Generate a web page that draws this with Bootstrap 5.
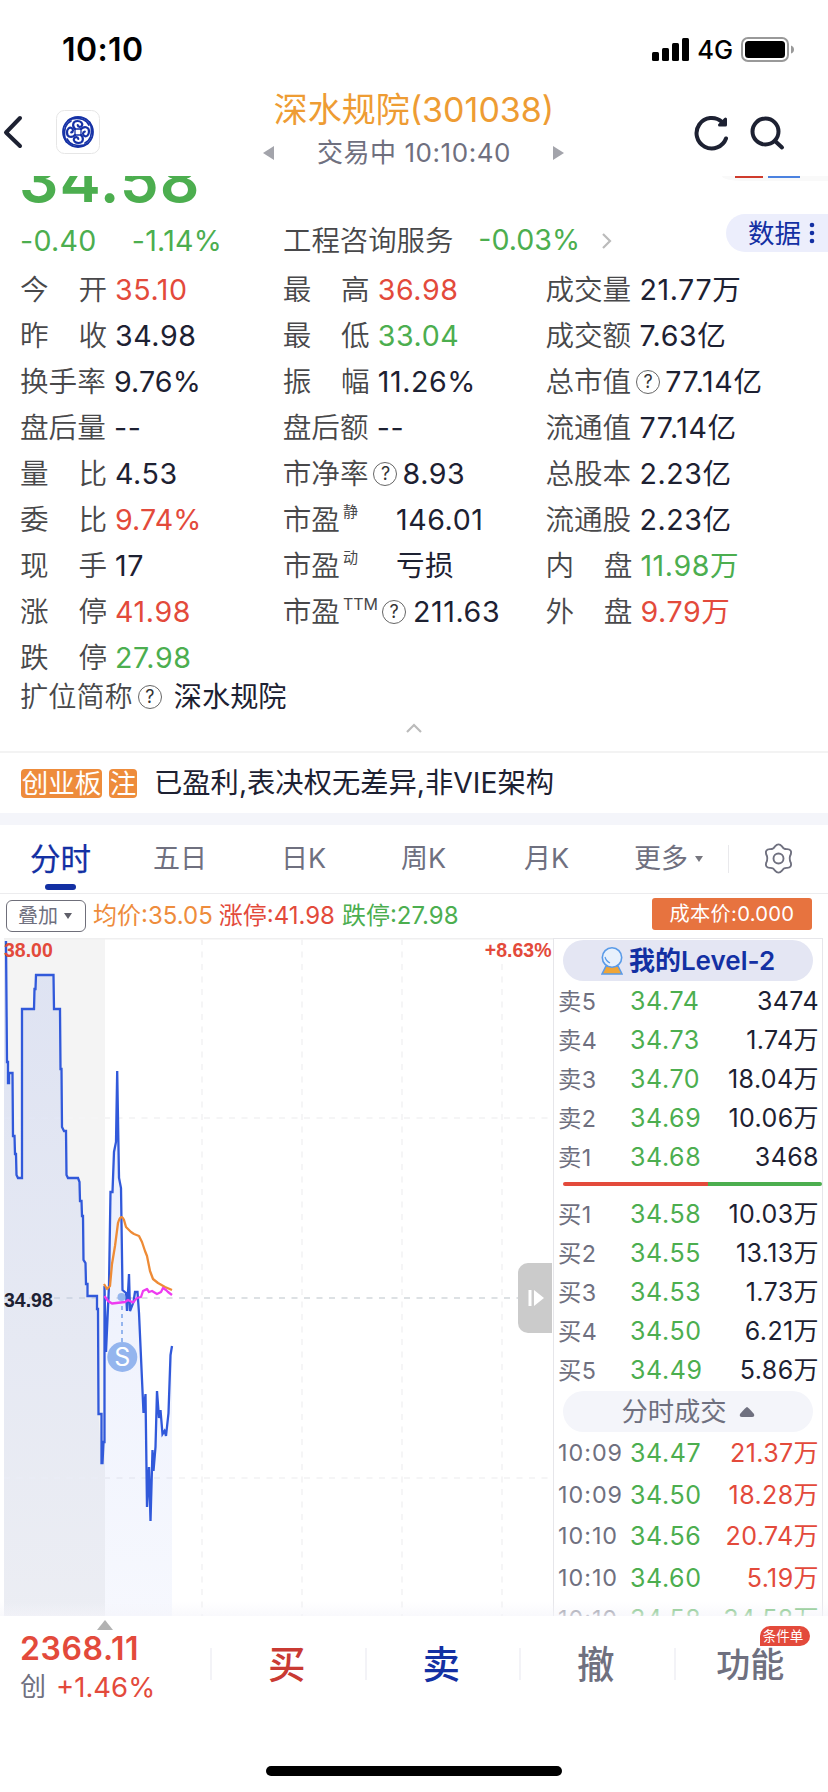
<!DOCTYPE html>
<html lang="zh-CN">
<head>
<meta charset="utf-8">
<meta name="viewport" content="width=device-width, initial-scale=1">
<title>深水规院(301038)</title>
<link href="https://cdn.jsdelivr.net/npm/bootstrap@5.3.0/dist/css/bootstrap.min.css" rel="stylesheet">
<style>
:root{--ink:#1d2132;--lbl:#48484a;--mute:#6f707f;--up:#e34a3b;--down:#4cae4f;--navy:#1330a3;--org:#ee8c3c}
html,body{height:1792px;overflow:hidden}
body{width:828px;background:#fff;color:var(--ink);font-family:Inter,"Noto Sans CJK SC",sans-serif;font-size:28.6px;line-height:46px;white-space:nowrap}
svg{display:block;flex:none}
.up{color:var(--up)}.down{color:var(--down)}.navy{color:var(--navy)}.mute{color:var(--mute)}.orange{color:var(--org)}
.status{height:99px;padding:0 34px 0 62px;color:#000}
.clock{font-size:32px;font-weight:600;letter-spacing:.4px}
.net{font-size:25.5px;font-weight:450;margin:0 8px 0 8px}
.head{height:77px;padding:0 43px 0 3px}
.title{font-size:34px;line-height:40px;color:#ee9c33}
.sub{font-size:26px;line-height:34px;color:var(--mute);letter-spacing:.55px}
.pricebox{height:39px;overflow:hidden}
.price{font-size:62px;font-weight:600;line-height:56px;margin:-24px 0 0 19px;letter-spacing:1px}
.chips{width:106px;height:5px;background:#f9f9f9;border-radius:0 0 0 20px/0 0 0 5px;padding-left:13px;gap:5px}
.chips i{height:2px}
.summary{height:52px;padding-left:20px}
.c1{width:263px;letter-spacing:.3px}
.datapill{width:102px;height:38px;border-radius:19px 0 0 19px;background:#eceefc;color:var(--navy);font-size:26.5px;line-height:38px;padding-left:22px;margin-top:-17px}
.quotes{padding-left:20px;height:413px}
.quotes>div{width:262.7px}
.q{height:46px;color:var(--ink);letter-spacing:.6px}
.k,.kf,.q sup{letter-spacing:0}
.k{width:86px;color:var(--lbl);margin-right:8px;flex:none;font-weight:350}
.k2{width:87px;display:flex;justify-content:space-between}
.kf{width:auto;color:var(--lbl);font-weight:350}
.q sup{font-size:15px;line-height:18px;top:0;align-self:flex-start;margin:6px 0 0 3px;color:var(--lbl)}
.qm{width:24px;height:24px;border:1.3px solid #666;border-radius:50%;font-size:18px;line-height:21px;text-align:center;color:#333;flex:none;letter-spacing:0}
.ext{height:40px;line-height:34px;padding:0 0 6px 20px;font-size:28.2px}
.note{height:62px;padding-left:21px;border-top:2px solid #f3f3f3}
.tag-o{background:var(--org);color:#fff;height:29px;line-height:28px;border-radius:4px;font-size:26.5px;margin-right:7px;text-align:center}
.band{height:12px;background:#f4f5fa}
.tabs{height:69px;border-bottom:1.5px solid #ececee;color:var(--mute);font-size:27px}
.tabs>div{display:flex;align-items:center;height:69px;padding-bottom:2px}
.tabs .on{position:relative;color:var(--navy);font-size:30.5px;font-weight:400;-webkit-text-stroke:.25px var(--navy)}
.on::after{content:"";position:absolute;left:45px;bottom:4px;width:31px;height:6px;border-radius:3px;background:var(--navy)}
.tri{width:0;height:0;border:4.5px solid transparent;border-bottom:0;border-top:6.5px solid #77777f}
.legendbar{height:44px;padding:0 16px 0 6px;font-size:24px}
.overlaybtn{width:80px;height:32px;border:1.6px solid #6f6f7a;border-radius:6px;font-size:20px;line-height:28px;color:var(--mute);padding-left:11px}
.cost{width:160px;height:32px;background:#e7733f;color:#fff;border-radius:3px;font-size:20.2px;line-height:32px;text-align:center;letter-spacing:.3px;margin-top:-4px}
.main{height:678px;position:relative;overflow:hidden}
.book{width:270px;height:690px;border:1.5px solid #e6e6ea;border-bottom:0;font-size:25px;letter-spacing:.4px}
.lv2,.deal{width:250px;height:41px;border-radius:21px;margin-left:9px;line-height:41px;letter-spacing:0}
.lv2{background:#e4e6f3;color:var(--navy);font-weight:600;font-size:26px;margin-top:1px;margin-bottom:1px}
.deal{background:#f4f5fa;color:var(--mute);font-size:26.3px;margin-top:1px}
.r{height:39px;line-height:39px;padding:0 3px 0 4px}
.r>:first-child{width:72px;font-size:23.3px;color:var(--mute)}
.r>:nth-child(2){letter-spacing:.6px}
.r>:last-child{margin-left:auto}
.t{height:41.5px;line-height:42px}
.t>:first-child{letter-spacing:1px}
.bidask{height:4px;margin:5px 0 9px 9px;width:259px;border-radius:2px;overflow:hidden}
.fade-b{position:absolute;left:0;right:0;bottom:0;height:14px;background:linear-gradient(rgba(244,244,250,0),rgba(244,244,250,.6))}
.foot{height:176px;padding-left:20px;position:relative}
.idx{width:190px;padding-top:14px}
.idx b{font-size:32px;font-weight:600;line-height:38px;display:block;letter-spacing:.6px}
.act{width:154.5px;height:32px;border-left:2px solid #f3f3f7;display:flex;align-items:center;justify-content:center;font-size:37.5px;font-weight:500;margin-top:32px;padding:2px 3px 0 0;position:relative}
.cond{position:absolute;left:84px;top:-22px;width:50px;height:20px;border-radius:10px 10px 10px 0;background:var(--up);color:#fff;font-size:13.5px;font-weight:400;line-height:20px;text-align:center;padding-right:3px}
.mark-up{position:absolute;left:97px;top:4px;border:8px solid transparent;border-top:0;border-bottom:10px solid #b2b2b2}
.home{position:absolute;left:266px;bottom:16px;width:296px;height:10px;border-radius:5px;background:#000}
</style>
</head>
<body>
<header class="status d-flex align-items-center">
  <span class="clock me-auto">10:10</span>
  <svg width="37" height="24" viewBox="0 0 37 24"><rect y="14" width="7" height="9" rx="1.5"/><rect x="10" y="10" width="7" height="13" rx="1.5"/><rect x="20" y="5" width="7" height="18" rx="1.5"/><rect x="30" width="7" height="23" rx="1.5"/></svg>
  <span class="net">4G</span>
  <svg width="53" height="26" viewBox="0 0 53 26"><rect x="1" y="1" width="46" height="23" rx="6" fill="#fff" stroke="#999" stroke-width="2"/><rect x="4" y="4" width="40" height="17" rx="3.5"/><path d="M50 8.500q3 1 3 4t-3 4z" fill="#999"/></svg>
</header>

<nav class="head d-flex align-items-start">
  <svg class="mt-3" width="22" height="34" viewBox="0 0 22 34" fill="none" stroke="#1d2132" stroke-width="4" stroke-linecap="round" stroke-linejoin="round"><path d="M17 3 3 17.500 17 31"/></svg>
  <svg width="44" height="44" viewBox="-22 -22 44 44" style="margin:11px 0 0 31px"><rect x="-21.500" y="-21.500" width="43" height="43" rx="8" fill="#fff" stroke="#e6e6e6"/>
    <g fill="none" stroke="#1632a6" stroke-width="2.200" stroke-linecap="round"><circle r="15" stroke-width="1.800"/>
      <g id="curl"><path d="M-3-3C-6-6-5.500-11-.5-11C3-11 5-8.500 4-6.500C3-4.500 0-4.500-.3-6.800"/><path d="M-3.500-3H3.500" stroke-width="1.300"/><path d="M-10-11.500Q-3-15 5-12.500Q9-11 11-7" stroke-width="1.700"/></g>
      <use href="#curl" transform="rotate(90)"/><use href="#curl" transform="rotate(180)"/><use href="#curl" transform="rotate(270)"/></g></svg>
  <div class="mx-auto d-flex flex-column align-items-center" style="padding-left:34px;margin-top:-9px">
    <div class="title">深水规院(301038)</div>
    <div class="d-flex align-items-center sub" style="margin-top:6px">
      <svg width="12" height="14"><path d="M11 0v14L0 7z" fill="#a3a4ab"/></svg>
      <span style="padding:0 42px 0 42px">交易中 10:10:40</span>
      <svg width="12" height="14"><path d="M0 0v14L11 7z" fill="#a3a4ab"/></svg>
    </div>
  </div>
  <svg class="mt-3" width="34" height="36" viewBox="694 114 34 36" fill="none" stroke="#1d2132" stroke-width="4" stroke-linecap="round"><path d="M726 137.500A15.200 15.200 0 1 1 722 121"/><path d="M725.500 118v6h-6z" fill="#1d2132" stroke-width="3" stroke-linejoin="round"/></svg>
  <svg class="mt-3" style="margin-left:21px" width="36" height="36" viewBox="750 114 36 36" fill="none" stroke="#1d2132" stroke-width="4" stroke-linecap="round"><circle cx="766.500" cy="130.500" r="13"/><path d="m776 140 7 6.500"/></svg>
</nav>

<section class="pricebox d-flex justify-content-between">
  <div class="price down">34.58</div>
  <div class="chips d-flex"><i style="width:28px;background:#cf3b2c"></i><i style="width:32px;background:#4b82e0"></i></div>
</section>
<section class="summary d-flex align-items-center">
  <div class="c1 down"><span>-0.40</span><span style="margin-left:35px">-1.14%</span></div>
  <span style="color:var(--lbl);font-size:28.400px;font-weight:350">工程咨询服务</span>
  <span class="down" style="margin:-3px 21px 0 25px">-0.03%</span>
  <svg width="12" height="18" fill="none" stroke="#bbb" stroke-width="2.200"><path d="m2 2 7 7-7 7"/></svg>
  <div class="datapill d-flex align-items-center ms-auto">数据<svg class="ms-2" width="6" height="22" fill="#1330a3"><circle cx="3" cy="3" r="2.300"/><circle cx="3" cy="11" r="2.300"/><circle cx="3" cy="19" r="2.300"/></svg></div>
</section>

<section class="quotes d-flex">
  <div>
    <div class="q d-flex"><span class="k k2"><i class="fst-normal">今</i><i class="fst-normal">开</i></span><span class="up">35.10</span></div>
    <div class="q d-flex"><span class="k k2"><i class="fst-normal">昨</i><i class="fst-normal">收</i></span><span>34.98</span></div>
    <div class="q d-flex"><span class="k">换手率</span><span style="letter-spacing:.1px">9.76%</span></div>
    <div class="q d-flex"><span class="k">盘后量</span><span>--</span></div>
    <div class="q d-flex"><span class="k k2"><i class="fst-normal">量</i><i class="fst-normal">比</i></span><span>4.53</span></div>
    <div class="q d-flex"><span class="k k2"><i class="fst-normal">委</i><i class="fst-normal">比</i></span><span class="up" style="letter-spacing:.1px">9.74%</span></div>
    <div class="q d-flex"><span class="k k2"><i class="fst-normal">现</i><i class="fst-normal">手</i></span><span>17</span></div>
    <div class="q d-flex"><span class="k k2"><i class="fst-normal">涨</i><i class="fst-normal">停</i></span><span class="up">41.98</span></div>
    <div class="q d-flex"><span class="k k2"><i class="fst-normal">跌</i><i class="fst-normal">停</i></span><span class="down">27.98</span></div>
  </div>
  <div>
    <div class="q d-flex"><span class="k k2"><i class="fst-normal">最</i><i class="fst-normal">高</i></span><span class="up">36.98</span></div>
    <div class="q d-flex"><span class="k k2"><i class="fst-normal">最</i><i class="fst-normal">低</i></span><span class="down">33.04</span></div>
    <div class="q d-flex"><span class="k k2"><i class="fst-normal">振</i><i class="fst-normal">幅</i></span><span>11.26%</span></div>
    <div class="q d-flex"><span class="k">盘后额</span><span>--</span></div>
    <div class="q d-flex align-items-center"><span class="kf">市净率</span><span class="qm" style="margin:0 5px">?</span><span>8.93</span></div>
    <div class="q d-flex"><span class="kf">市盈</span><sup>静</sup><span style="margin-left:38px">146.01</span></div>
    <div class="q d-flex"><span class="kf">市盈</span><sup>动</sup><span style="margin-left:38px">亏损</span></div>
    <div class="q d-flex align-items-center"><span class="kf">市盈</span><sup style="font-size:16px">TTM</sup><span class="qm" style="margin:0 7px 0 4px">?</span><span>211.63</span></div>
  </div>
  <div>
    <div class="q d-flex"><span class="k">成交量</span><span>21.77万</span></div>
    <div class="q d-flex"><span class="k">成交额</span><span>7.63亿</span></div>
    <div class="q d-flex align-items-center"><span class="kf">总市值</span><span class="qm" style="margin:0 5px">?</span><span>77.14亿</span></div>
    <div class="q d-flex"><span class="k">流通值</span><span>77.14亿</span></div>
    <div class="q d-flex"><span class="k">总股本</span><span>2.23亿</span></div>
    <div class="q d-flex"><span class="k">流通股</span><span>2.23亿</span></div>
    <div class="q d-flex"><span class="k k2"><i class="fst-normal">内</i><i class="fst-normal">盘</i></span><span class="down">11.98万</span></div>
    <div class="q d-flex"><span class="k k2"><i class="fst-normal">外</i><i class="fst-normal">盘</i></span><span class="up">9.79万</span></div>
  </div>
</section>
<section class="ext d-flex align-items-center"><span class="kf">扩位简称</span><span class="qm" style="margin:0 12px 0 5px">?</span><span>深水规院</span></section>
<div style="height:31px;padding-top:2px"><svg class="mx-auto" width="18" height="12" fill="none" stroke="#bbb" stroke-width="2.200"><path d="m2 10 7-7 7 7"/></svg></div>

<section class="note d-flex align-items-center">
  <span class="tag-o" style="width:81px">创业板</span><span class="tag-o" style="width:28px">注</span>
  <span style="margin-left:10px;font-size:28.300px">已盈利,表决权无差异,非VIE架构</span>
</section>
<div class="band"></div>

<nav class="tabs d-flex">
  <div class="on" style="width:124px;padding-left:30px">分时</div>
  <div style="width:128px;padding-left:29px">五日</div>
  <div style="width:122px;padding-left:29px">日K</div>
  <div style="width:122px;padding-left:27px">周K</div>
  <div style="width:124px;padding-left:28px">月K</div>
  <div style="width:108px;padding-left:14px">更多<i class="tri" style="margin-left:7px"></i></div>
  <div style="width:1px;height:28px;background:#e9e9ec;margin-top:20px;padding:0"></div>
  <div style="padding-left:34px"><svg width="31" height="31" viewBox="-15.500 -15.500 31 31" fill="none" stroke="#6f707f" stroke-width="1.900" stroke-linejoin="round"><circle r="5"/><path d="M-3.500-12.200Q0-16 3.500-12.200Q5-9.200 8.600-9.400Q13.600-9 12.400-4.500Q10 0 12.400 4.500Q13.600 9 8.600 9.400Q5 9.200 3.500 12.200Q0 16-3.500 12.200Q-5 9.200-8.600 9.400Q-13.600 9-12.400 4.500Q-10 0-12.400-4.500Q-13.600-9-8.600-9.400Q-5-9.200-3.500-12.200Z"/></svg></div>
</nav>
<section class="legendbar d-flex align-items-center">
  <span class="overlaybtn d-flex align-items-center">叠加<i class="tri" style="margin-left:6px;border-left-width:4px;border-right-width:4px;border-top-color:#5f5f69"></i></span>
  <span class="orange" style="margin-left:7px">均价:35.05</span>
  <span class="up" style="margin-left:6px">涨停:41.98</span>
  <span class="down" style="margin-left:7px">跌停:27.98</span>
  <span class="cost ms-auto">成本价:0.000</span>
</section>

<section class="main d-flex">
  <svg width="553" height="678" viewBox="0 938 553 678">
    <defs><linearGradient id="g" x1="0" y1="940" x2="0" y2="1616" gradientUnits="userSpaceOnUse"><stop offset="0" stop-color="#3a62e6" stop-opacity=".12"/><stop offset="1" stop-color="#3a62e6" stop-opacity=".045"/></linearGradient></defs>
    <rect x="4" y="938" width="101" height="678" fill="#f4f4f4"/>
    <path d="M4 938.500H553" stroke="#efeff0" stroke-width="2"/>
    <g stroke="#f5f5f6" stroke-width="2" stroke-dasharray="6 6.500"><path d="M202 939V1616M302 939V1616M402 939V1616M502 939V1616M4 1118H553M4 1478H553"/><path d="M4 1298H553" stroke="#dde1e4"/></g>
    <path fill="url(#g)" d="M4 941H6L7 1062 8.500 1084 9.500 1073H12.500L13 1136 15 1154 16.500 1175 18 1178H22V1009H34L36 975H53L54 1009H60L60.500 1069 62 1128 64 1131H66L66.500 1175 68 1178H78L80 1201 82 1216 83.500 1260 85.500 1263 87.500 1296H97L98.500 1414 101.500 1463 103.500 1442 104.500 1287 106 1352 108 1300 110 1192H112L114 1152 116 1142 117 1070 118.500 1142 121 1188 122.500 1290 126 1294 127 1311 129 1273 130 1311 135 1292H138L143.500 1412 145.500 1394 147 1507 149 1467 150.500 1521 152.500 1450 153.500 1470 155.500 1447 157 1391 159 1418 160.500 1410 162.500 1433 165.500 1436 168.500 1413 170.500 1355 172 1346V1616H4Z"/>
    <path fill="none" stroke="#3159da" stroke-width="2.300" d="M6 941 7 1062H8V1083H9V1073H12.500L13 1136H14.500L15 1154H16L16.500 1175 18 1178H22V1009H34L34.500 989H35.500L36 975H53.500L54 1009H60L60.500 1069H61.500L62 1127 64 1131H66L66.500 1175 68 1178H78L79.500 1182 80 1201H81.500L82 1216H83L83.500 1260 85.500 1263 86 1284H87.500V1296H97V1309H98L98.500 1414H101.500V1463H102.500L103.500 1442H104.500V1286L106 1352 109 1285 110.500 1192H112.500L114 1152 116 1142 117.200 1071 119 1178 121 1188 122.500 1290 126 1293 127 1311 129 1274 130 1311 133.500 1302 135 1292H137.500L139 1313 143.500 1413 145.500 1394 147 1507 149 1467 150.500 1521 152.500 1450 153.500 1471 155.500 1447 157 1391 159 1418 160.500 1410 162.500 1434 164.500 1431 166 1436 168.500 1413 170.500 1355 172 1346"/>
    <path fill="none" stroke="#ee8b36" stroke-width="2.300" stroke-linejoin="round" d="M104 1284 107 1289 110 1286 112 1264 115 1246 118 1223Q121 1213 124 1220L126 1227 131 1232 134 1234 139 1236 142 1242 145 1251 147 1256 150 1271 153 1279 158 1283 165 1287 172 1290"/>
    <path fill="none" stroke="#ee3bf0" stroke-width="2.300" stroke-linejoin="round" d="M104.500 1296 108 1301 112 1303.500 125 1302 128 1300 133 1302.500 137 1298 141 1297 143 1291 147 1289 149 1292 152 1291 157 1294 161 1292 163 1288 166 1290 168 1292 172 1295"/>
    <circle cx="121.500" cy="1297" r="4" fill="#94b5ee"/>
    <path d="M122 1306V1345" stroke="#94b5ee" stroke-width="2" stroke-dasharray="4 4"/>
    <circle cx="122.300" cy="1357" r="15" fill="#94b5ee"/><text x="122.300" y="1366" font-size="25" fill="#fff" text-anchor="middle">S</text>
    <g font-family="Liberation Sans" font-weight="700" font-size="19.500"><text x="4" y="957" fill="#e34a3b">38.00</text><text x="551.500" y="957" fill="#e34a3b" text-anchor="end">+8.63%</text><text x="4" y="1307" fill="#1d2132">34.98</text></g>
    <path d="M552 1263H528a10 10 0 0 0-10 10v50a10 10 0 0 0 10 10H552Z" fill="#cbcbcb"/><path d="M530 1290V1306" stroke="#fff" stroke-width="3"/><path d="M534 1290V1306L544 1298Z" fill="#fff"/>
  </svg>
  <aside class="book">
    <div class="lv2 d-flex align-items-center justify-content-center"><svg width="22" height="28" viewBox="0 0 22 28" style="margin-right:6px"><path d="M5 19h12l4 8H1z" fill="#efa537" stroke="#5a9be8" stroke-width="1.500"/><circle cx="11" cy="10.500" r="9.700" fill="#e8f1fc" stroke="#5a9be8" stroke-width="1.600"/><path d="M4 10q1 4 5 6" stroke="#5a9be8" stroke-width="1.200" fill="none"/></svg>我的Level-2</div>
    <div class="r d-flex"><span>卖5</span><span class="down">34.74</span><span>3474</span></div>
    <div class="r d-flex"><span>卖4</span><span class="down">34.73</span><span>1.74万</span></div>
    <div class="r d-flex"><span>卖3</span><span class="down">34.70</span><span>18.04万</span></div>
    <div class="r d-flex"><span>卖2</span><span class="down">34.69</span><span>10.06万</span></div>
    <div class="r d-flex"><span>卖1</span><span class="down">34.68</span><span>3468</span></div>
    <div class="bidask d-flex"><div style="width:56%;background:#e34a3b"></div><div style="width:44%;background:#4cae4f"></div></div>
    <div class="r d-flex"><span>买1</span><span class="down">34.58</span><span>10.03万</span></div>
    <div class="r d-flex"><span>买2</span><span class="down">34.55</span><span>13.13万</span></div>
    <div class="r d-flex"><span>买3</span><span class="down">34.53</span><span>1.73万</span></div>
    <div class="r d-flex"><span>买4</span><span class="down">34.50</span><span>6.21万</span></div>
    <div class="r d-flex"><span>买5</span><span class="down">34.49</span><span>5.86万</span></div>
    <div class="deal d-flex align-items-center justify-content-center">分时成交<svg style="margin-left:12px" width="16" height="10"><path d="M8 0Q9 0 15 7q1 3-2 3H3Q0 10 1 7 7 0 8 0" fill="#6f707f"/></svg></div>
    <div class="r t d-flex"><span>10:09</span><span class="down">34.47</span><span class="up">21.37万</span></div>
    <div class="r t d-flex"><span>10:09</span><span class="down">34.50</span><span class="up">18.28万</span></div>
    <div class="r t d-flex"><span>10:10</span><span class="down">34.56</span><span class="up">20.74万</span></div>
    <div class="r t d-flex"><span>10:10</span><span class="down">34.60</span><span class="up">5.19万</span></div>
    <div class="r t d-flex opacity-75"><span>10:10</span><span class="down">34.58</span><span class="down">34.58万</span></div>
  </aside>
  <div class="fade-b"></div>
</section>

<footer class="foot d-flex align-items-start">
  <i class="mark-up"></i>
  <div class="idx"><b class="up">2368.11</b><div class="d-flex align-items-center" style="line-height:38px;font-size:27.500px"><span class="mute" style="font-size:26px">创</span><span class="up" style="margin-left:10px">+1.46%</span></div></div>
  <div class="act" style="color:#c93a33">买</div>
  <div class="act navy">卖</div>
  <div class="act mute">撤</div>
  <div class="act mute" style="font-size:34px">功能<span class="cond">条件单</span></div>
  <div class="home"></div>
</footer>
<script src="https://cdn.jsdelivr.net/npm/bootstrap@5.3.0/dist/js/bootstrap.bundle.min.js"></script>
</body>
</html>
